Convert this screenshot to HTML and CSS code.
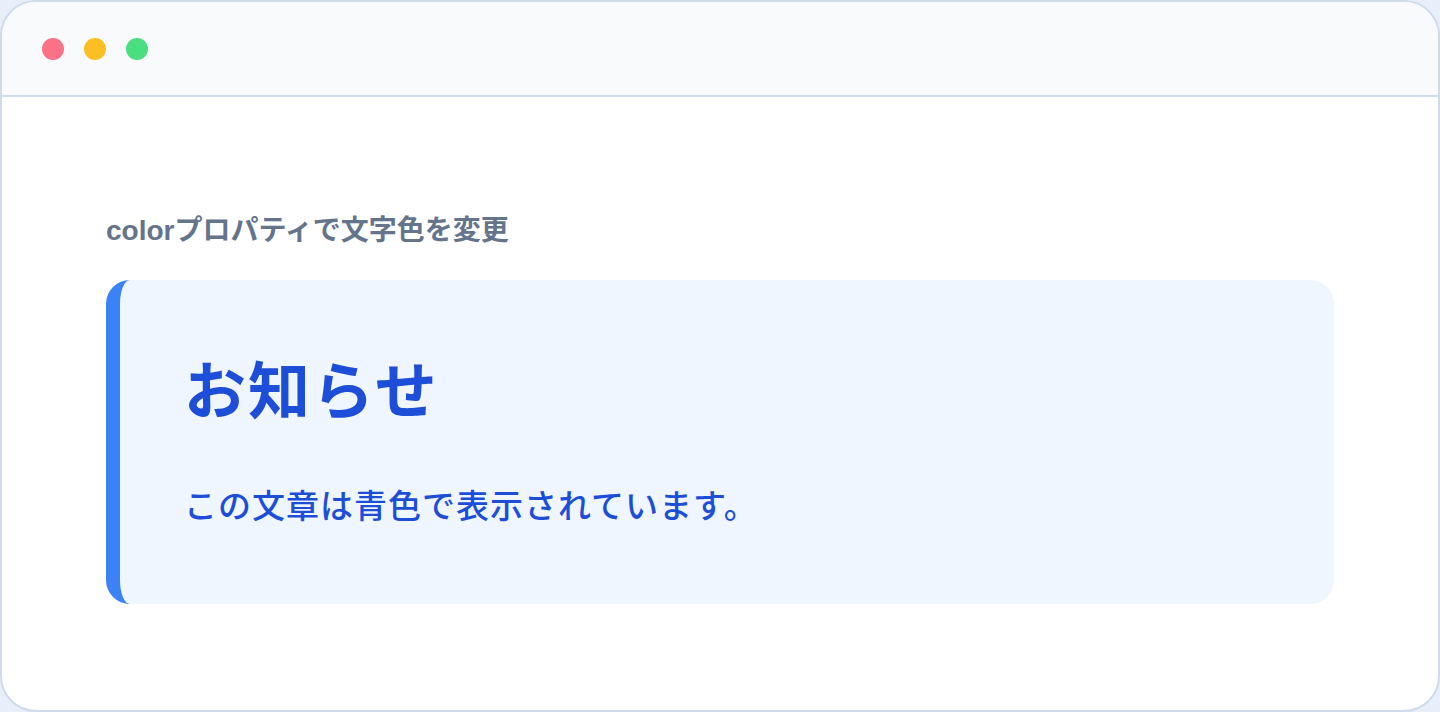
FILE: index.html
```html
<!DOCTYPE html>
<html lang="ja">
<head>
  <meta charset="UTF-8">
  <meta name="viewport" content="width=device-width, initial-scale=1.0">
  <link rel="stylesheet" href="styles.css">
</head>
<body>

<div class="window">
  <div class="titlebar">
    <span class="dot red"></span>
    <span class="dot yellow"></span>
    <span class="dot green"></span>
  </div>

  <div class="content">
    <div class="label">colorプロパティで文字色を変更</div>

    <div class="notice">
      <h1>お知らせ</h1>
      <p>この文章は青色で表示されています。</p>
    </div>
  </div>
</div>

</body>
</html>
```

FILE: styles.css
```css
body {
  margin: 0;
  background-color: #e8effb;
  font-family: 'Liberation Sans', 'Noto Sans CJK JP', sans-serif;
  overflow: hidden;
}

.window {
  box-sizing: border-box;
  width: 1440px;
  height: 712px;
  background-color: #ffffff;
  border: 2px solid #cfdaeb;
  border-radius: 36px;
  overflow: hidden;
}

.titlebar {
  height: 93px;
  background-color: #f8fafc;
  border-bottom: 2px solid #cfdaeb;
  display: flex;
  align-items: center;
  gap: 20px;
  padding-left: 40px;
}

.dot {
  width: 22px;
  height: 22px;
  border-radius: 50%;
}

.dot.red {
  background-color: #fb7185;
}

.dot.yellow {
  background-color: #fbbf24;
}

.dot.green {
  background-color: #4ade80;
}

.content {
  padding: 113px 104px 0;
}

.label {
  font-size: 28px;
  line-height: 42px;
  font-weight: bold;
  color: #64748b;
  margin-bottom: 28px;
}

.notice {
  box-sizing: border-box;
  height: 324px;
  background-color: #eff6ff;
  border-left: 14px solid #3b82f6;
  border-radius: 24px;
  padding: 77px 64px 72px;
}

.notice h1 {
  margin: 0 0 52px;
  font-size: 62px;
  line-height: 72px;
  font-weight: bold;
  letter-spacing: 2px;
  color: #1d4ed8;
}

.notice p {
  margin: 0;
  font-size: 33px;
  line-height: 51px;
  font-weight: 500;
  letter-spacing: 1px;
  color: #1d4ed8;
}
```
